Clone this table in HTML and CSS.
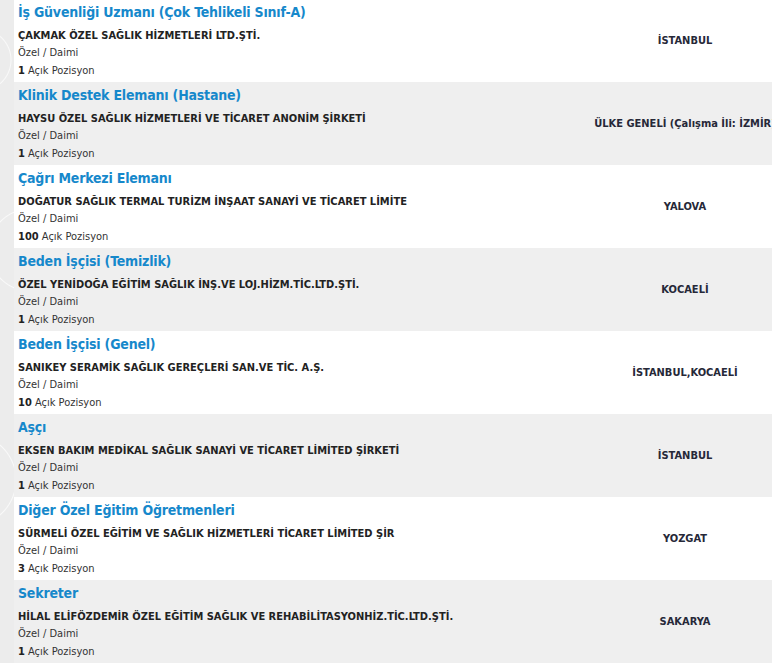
FILE: index.html
```html
<!DOCTYPE html>
<html lang="tr">
<head>
<meta charset="utf-8">
<title>İş İlanları</title>
<link rel="stylesheet" href="styles.css">
</head>
<body>
<div class="page">
  <div class="side"></div>
  <div class="list">
    <div class="row">
      <div class="info">
        <a class="title">İş Güvenliği Uzmanı (Çok Tehlikeli Sınıf-A)</a>
        <div class="company">ÇAKMAK ÖZEL SAĞLIK HİZMETLERİ LTD.ŞTİ.</div>
        <div class="meta">Özel / Daimi</div>
        <div class="meta"><b>1</b> Açık Pozisyon</div>
      </div>
      <div class="city"><span>İSTANBUL</span></div>
    </div>
    <div class="row alt">
      <div class="info">
        <a class="title">Klinik Destek Elemanı (Hastane)</a>
        <div class="company">HAYSU ÖZEL SAĞLIK HİZMETLERİ VE TİCARET ANONİM ŞİRKETİ</div>
        <div class="meta">Özel / Daimi</div>
        <div class="meta"><b>1</b> Açık Pozisyon</div>
      </div>
      <div class="city"><span>ÜLKE GENELİ (Çalışma İli: İZMİR)</span></div>
    </div>
    <div class="row">
      <div class="info">
        <a class="title">Çağrı Merkezi Elemanı</a>
        <div class="company">DOĞATUR SAĞLIK TERMAL TURİZM İNŞAAT SANAYİ VE TİCARET LİMİTE</div>
        <div class="meta">Özel / Daimi</div>
        <div class="meta"><b>100</b> Açık Pozisyon</div>
      </div>
      <div class="city"><span>YALOVA</span></div>
    </div>
    <div class="row alt">
      <div class="info">
        <a class="title">Beden İşçisi (Temizlik)</a>
        <div class="company">ÖZEL YENİDOĞA EĞİTİM SAĞLIK İNŞ.VE LOJ.HİZM.TİC.LTD.ŞTİ.</div>
        <div class="meta">Özel / Daimi</div>
        <div class="meta"><b>1</b> Açık Pozisyon</div>
      </div>
      <div class="city"><span>KOCAELİ</span></div>
    </div>
    <div class="row">
      <div class="info">
        <a class="title">Beden İşçisi (Genel)</a>
        <div class="company">SANIKEY SERAMİK SAĞLIK GEREÇLERİ SAN.VE TİC. A.Ş.</div>
        <div class="meta">Özel / Daimi</div>
        <div class="meta"><b>10</b> Açık Pozisyon</div>
      </div>
      <div class="city"><span>İSTANBUL,KOCAELİ</span></div>
    </div>
    <div class="row alt">
      <div class="info">
        <a class="title">Aşçı</a>
        <div class="company">EKSEN BAKIM MEDİKAL SAĞLIK SANAYİ VE TİCARET LİMİTED ŞİRKETİ</div>
        <div class="meta">Özel / Daimi</div>
        <div class="meta"><b>1</b> Açık Pozisyon</div>
      </div>
      <div class="city"><span>İSTANBUL</span></div>
    </div>
    <div class="row">
      <div class="info">
        <a class="title">Diğer Özel Eğitim Öğretmenleri</a>
        <div class="company">SÜRMELİ ÖZEL EĞİTİM VE SAĞLIK HİZMETLERİ TİCARET LİMİTED ŞİR</div>
        <div class="meta">Özel / Daimi</div>
        <div class="meta"><b>3</b> Açık Pozisyon</div>
      </div>
      <div class="city"><span>YOZGAT</span></div>
    </div>
    <div class="row alt">
      <div class="info">
        <a class="title">Sekreter</a>
        <div class="company">HİLAL ELİFÖZDEMİR ÖZEL EĞİTİM SAĞLIK VE REHABİLİTASYONHİZ.TİC.LTD.ŞTİ.</div>
        <div class="meta">Özel / Daimi</div>
        <div class="meta"><b>1</b> Açık Pozisyon</div>
      </div>
      <div class="city"><span>SAKARYA</span></div>
    </div>
  </div>
</div>
</body>
</html>
```
FILE: styles.css
```css
html, body {
  margin: 0;
  padding: 0;
  overflow: hidden;
  background: #ededed;
}
body {
  font-family: "DejaVu Sans Condensed", "DejaVu Sans", sans-serif;
  font-stretch: condensed;
  color: #333;
}
.page {
  display: flex;
  width: 772px;
}
.side {
  width: 14px;
  flex: none;
  background:
    radial-gradient(circle at -20px 60px, transparent 30px, rgba(255,255,255,0.7) 31px, transparent 32px),
    radial-gradient(circle at 30px 250px, transparent 40px, rgba(255,255,255,0.7) 41px, transparent 42px),
    radial-gradient(circle at -30px 480px, transparent 45px, rgba(255,255,255,0.7) 46px, transparent 47px),
    #ececec;
}
.list {
  flex: 1;
  margin-top: -1px;
}
.row {
  display: grid;
  grid-template-columns: 584px 174px;
  height: 83px;
  background: #ffffff;
}
.row.alt {
  background: #efefef;
}
.info {
  padding: 3px 0 0 4px;
  overflow: hidden;
  white-space: nowrap;
}
.title {
  display: block;
  font-size: 14px;
  font-weight: bold;
  line-height: 20px;
  letter-spacing: -0.2px;
  color: #1688cb;
  margin-bottom: 5px;
}
.company {
  font-size: 11px;
  font-weight: bold;
  line-height: 18px;
  margin-bottom: -1px;
  color: #222;
}
.meta {
  font-size: 11px;
  line-height: 18px;
  color: #333;
}
.meta b {
  color: #222;
}
.city {
  display: flex;
  align-items: center;
  justify-content: center;
  white-space: nowrap;
  font-size: 11px;
  font-weight: bold;
  color: #262838;
}
```
